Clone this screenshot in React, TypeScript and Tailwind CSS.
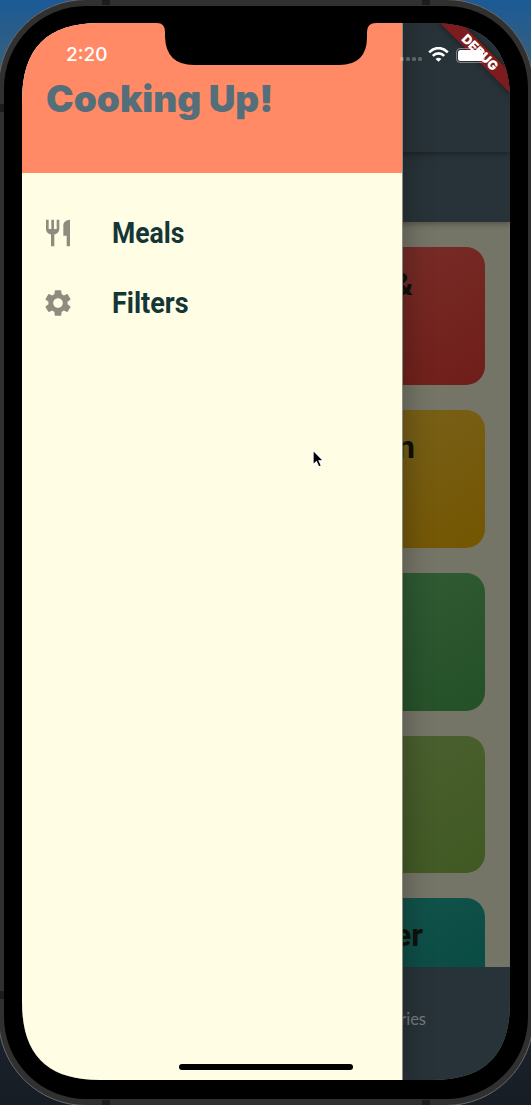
import React from "react";

type Card = { text: string; tone: string; right: string };

const cards: Card[] = [
  { text: "Light &", tone: "from-[#7a322e] to-[#701d18]", right: "pr-[72px]" },
  { text: "Italian", tone: "from-[#79641f] to-[#745600]", right: "pr-[70px]" },
  { text: "", tone: "from-[#355f38] to-[#245027]", right: "" },
  { text: "", tone: "from-[#4f6234] to-[#405922]", right: "" },
  { text: "Summer", tone: "from-[#17584f] to-[#044841]", right: "pr-[62px]" },
];

function CategoryCard({ text, tone, right }: Card) {
  return (
    <div
      className={`h-[137.85px] w-[206px] shrink-0 self-end rounded-[19px] bg-gradient-to-br pt-[19px] text-right font-['Roboto'] text-[32px] leading-[37px] font-bold text-[#10100b] ${tone} ${right}`}
    >
      {text}
    </div>
  );
}

function StatusBar() {
  return (
    <div className="flex h-[62px] items-center pt-[2px] pr-[25px] pl-[44px] text-white">
      <div className="flex-1 font-['Inter'] text-[19px] leading-6 font-medium">2:20</div>
      <div className="mt-[8px] mr-[6px] flex gap-[2px]">
        {[0, 1, 2, 3].map((i) => (
          <span key={i} className="size-[4px] rounded-[1.5px] bg-white/25" />
        ))}
      </div>
      <svg className="mr-[7px]" width="21" height="16" viewBox="0 0 21 16" fill="none" stroke="white" strokeWidth="2.6">
        <path d="M1.2 5.3C6.5-.3 14.5-.3 19.8 5.3" />
        <path d="M4.8 8.8c3.2-3.2 8.2-3.2 11.4 0" />
        <path d="M10.5 14.8 7.6 11.9q2.9-2.2 5.8 0z" fill="white" stroke="none" />
      </svg>
      <div className="h-[15px] w-[29px] rounded-[4px] border border-white/40 p-[1px]">
        <div className="h-full rounded-[2.5px] bg-white" />
      </div>
    </div>
  );
}

function Drawer() {
  return (
    <aside className="h-full w-[381px] border-r border-black/45 bg-[#fffde4] shadow-[0_0_24px_6px_rgba(0,0,0,0.24)]">
      <header className="flex h-[150px] items-center bg-[#ff8a65] pt-[2px] pl-[24px]">
        <h1 className="font-['Inter'] text-[37px] leading-[48px] font-black whitespace-nowrap text-[#546e7a]">Cooking Up!</h1>
      </header>
      <nav className="flex flex-col pt-[25px] font-['Roboto'] text-[30px] font-bold text-[#143636]">
        <a className="flex h-[70px] items-center pl-[20px]">
          <svg className="mr-[38px] size-[32px] shrink-0" viewBox="0 0 24 24" fill="#8f8c7f">
            <path d="M11 9H9V2H7v7H5V2H3v7c0 2.12 1.66 3.84 3.75 3.97V22h2.5v-9.03C11.34 12.84 13 11.12 13 9V2h-2v7zm5-3v8h2.5v8H21V2c-2.76 0-5 2.24-5 4z" />
          </svg>
          <span className="origin-left scale-x-[0.885] pb-[2px]">Meals</span>
        </a>
        <a className="flex h-[70px] items-center pl-[20px]">
          <svg className="mr-[38px] size-[32px] shrink-0" viewBox="0 0 24 24" fill="#8f8c7f">
            <path d="M19.14 12.94c.04-.3.06-.61.06-.94 0-.32-.02-.64-.07-.94l2.03-1.58c.18-.14.23-.41.12-.61l-1.92-3.32c-.12-.22-.37-.29-.59-.22l-2.39.96c-.5-.38-1.03-.7-1.62-.94l-.36-2.54c-.04-.24-.24-.41-.48-.41h-3.84c-.24 0-.43.17-.47.41l-.36 2.54c-.59.24-1.13.57-1.62.94l-2.39-.96c-.22-.08-.47 0-.59.22L2.74 8.87c-.12.21-.08.47.12.61l2.03 1.58c-.05.3-.09.63-.09.94s.02.64.07.94l-2.03 1.58c-.18.14-.23.41-.12.61l1.92 3.32c.12.22.37.29.59.22l2.39-.96c.5.38 1.03.7 1.62.94l.36 2.54c.05.24.24.41.48.41h3.84c.24 0 .44-.17.47-.41l.36-2.54c.59-.24 1.13-.56 1.62-.94l2.39.96c.22.08.47 0 .59-.22l1.92-3.32c.12-.22.07-.47-.12-.61l-2.01-1.58zM12 15.6c-1.98 0-3.6-1.62-3.6-3.6s1.62-3.6 3.6-3.6 3.6 1.62 3.6 3.6-1.62 3.6-3.6 3.6z" />
          </svg>
          <span className="origin-left scale-x-[0.9] pb-[2px]">Filters</span>
        </a>
      </nav>
    </aside>
  );
}

function Screen() {
  return (
    <div className="relative mt-[17.5px] ml-[18px] h-[1057px] w-[488px] overflow-hidden bg-[#757567] [clip-path:path('M0_78C0_25_25_0_78_0H410C463_0_488_25_488_78V979C488_1032_463_1057_410_1057H78C25_1057_0_1032_0_979Z')]">
      <div className="flex h-full flex-col">
        <div className="relative z-20 h-[129px] shrink-0 bg-[#283339] shadow-[0_2px_6px_rgba(0,0,0,0.35)]" />
        <div className="relative z-10 h-[70px] shrink-0 bg-[#283339] shadow-[0_2px_6px_rgba(0,0,0,0.3)]" />
        <div className="flex min-h-0 flex-1 flex-col gap-[25px] overflow-hidden pt-[25px] pr-[25px]">
          {cards.map((card, i) => (
            <CategoryCard key={i} {...card} />
          ))}
        </div>
        <div className="h-[113px] shrink-0 bg-[#283339] pt-[42px] pr-[84px] text-right font-['Lato'] text-[16.5px] leading-5 text-[#777c7e]">Categories</div>
      </div>
      <div className="absolute inset-0 z-30">
        <Drawer />
      </div>
      <div className="absolute top-[22px] left-[398px] z-30 flex h-[15px] w-[120px] rotate-45 items-center justify-center bg-[#7d1c1e] font-['Inter'] text-[13px] font-black text-white shadow-[0_0_6px_rgba(0,0,0,0.5)]">DEBUG</div>
      <div className="absolute inset-0 z-40 flex flex-col justify-between">
        <StatusBar />
        <div className="mb-[10px] h-[6px] w-[174px] self-center rounded-full bg-black" />
      </div>
      <svg className="absolute top-[425px] left-[289px] z-40" width="14" height="22" viewBox="0 0 14 22">
        <path d="M2 2v15l3.4-3.1 2.3 5.2 2.8-1.3-2.3-5H12.6z" fill="black" stroke="white" strokeWidth="1.3" />
      </svg>
      <div className="absolute inset-x-0 top-0 z-40 flex justify-center">
        <svg width="219" height="43" viewBox="0 0 219 43">
          <path d="M0 0Q8 0 8 9V14Q9 42 37 42H182Q210 42 210 14V9Q210 0 219 0Z" fill="black" />
        </svg>
      </div>
    </div>
  );
}

function AntennaBands() {
  return (
    <div className="flex justify-between pr-[101px] pl-[102px]">
      <span className="h-[5px] w-2 bg-[#1c1c1c]" />
      <span className="h-[5px] w-2 bg-[#1c1c1c]" />
    </div>
  );
}

export default function App() {
  return (
    <main className="relative h-[1105px] w-[531px] overflow-hidden bg-gradient-to-b from-[#1b5a96] from-0% via-[#35607c] via-[6%] to-[#171d25] to-100%">
      <div className="-mt-px -ml-[2px] h-[1107px] w-[536px] rounded-[88px] border border-[#68686a] bg-[#303030] pt-[5.5px] pl-[5px]">
        <div className="h-[1093px] w-[524px] overflow-hidden rounded-[82px] bg-black">
          <Screen />
        </div>
      </div>
      <div className="absolute inset-0 flex flex-col justify-between">
        <AntennaBands />
        <div className="flex flex-1 flex-col justify-between pt-[99px] pb-[101px]">
          <span className="h-2 w-[4px] bg-[#1c1c1c]" />
          <span className="h-2 w-[4px] bg-[#1c1c1c]" />
        </div>
        <AntennaBands />
      </div>
    </main>
  );
}
